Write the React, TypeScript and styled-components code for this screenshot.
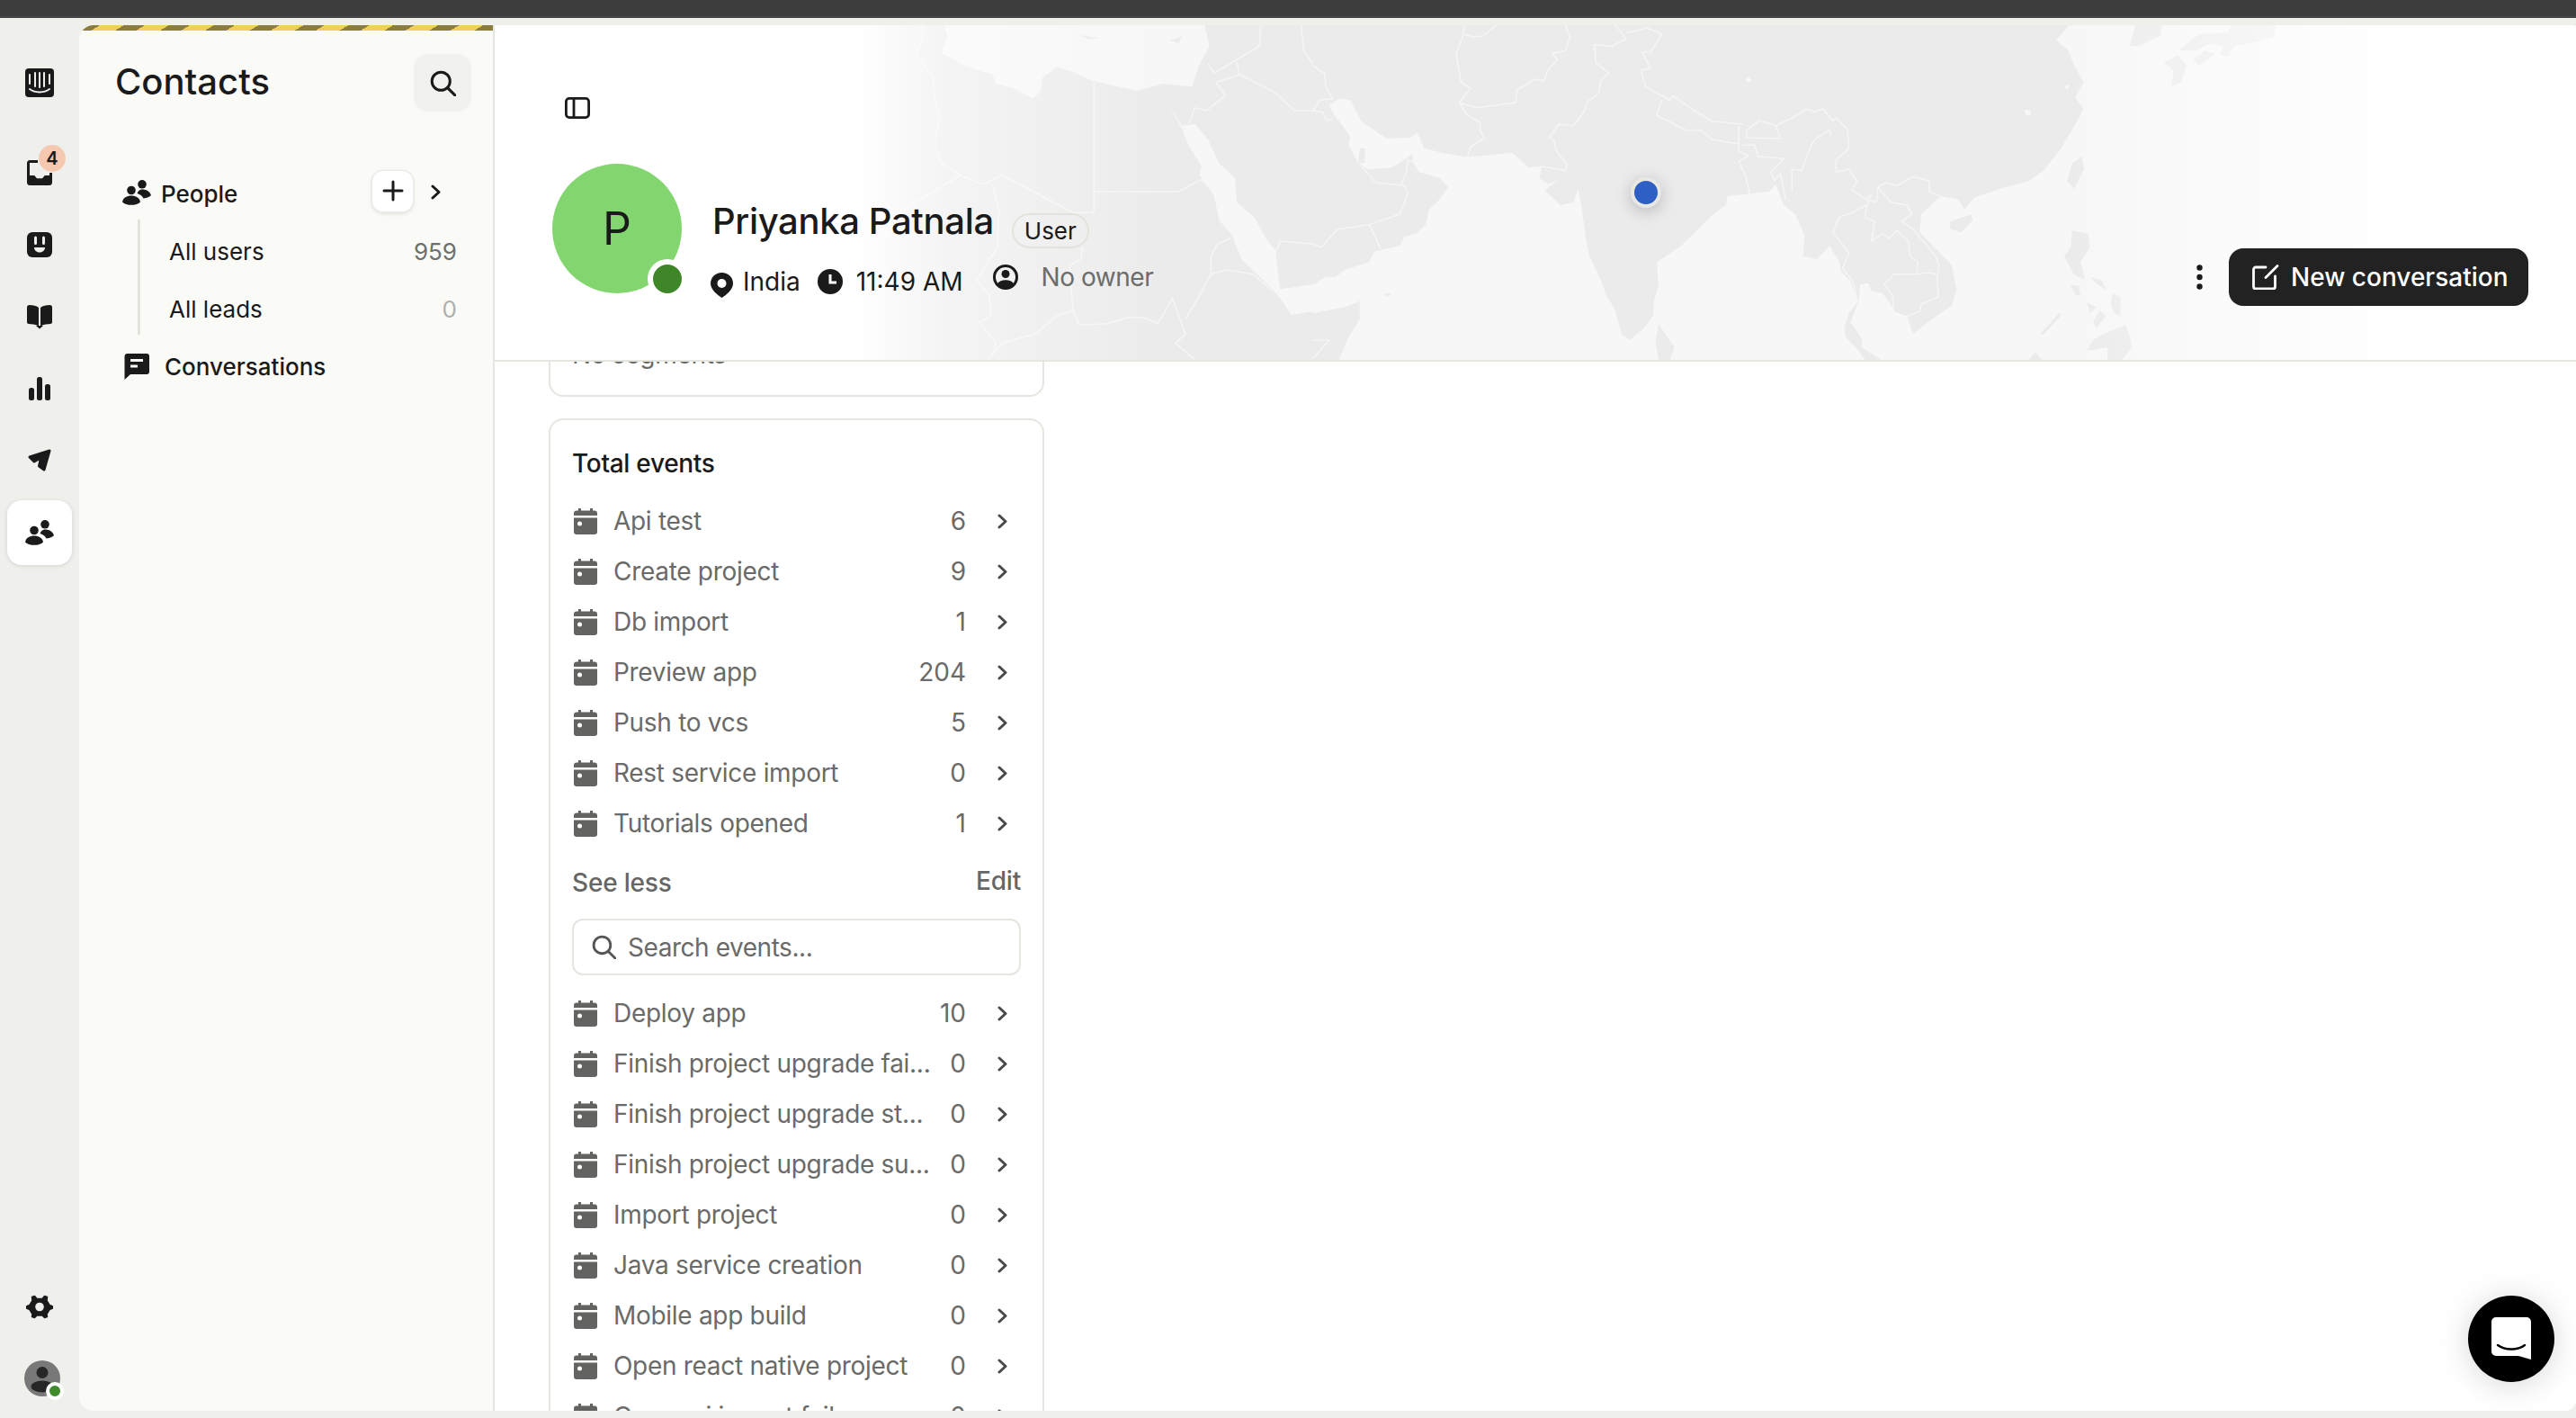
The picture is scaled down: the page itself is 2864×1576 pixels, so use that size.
import React from "react";
import styled, { createGlobalStyle } from "styled-components";

const GlobalStyle = createGlobalStyle`
  html, body { margin: 0; padding: 0; background: #efefec; }
  * { box-sizing: border-box; }
  body { font-family: Inter, "Noto Sans", "Liberation Sans", sans-serif; color: #1a1a1a; overflow: hidden; }
`;

const Page = styled.div`
  width: 2864px;
  height: 1576px;
  display: flex;
  flex-direction: column;
  overflow: hidden;
  background: #efefec;
`;
const TopBar = styled.div`
  height: 20px;
  flex: none;
  background: #3d3d3d;
  border-bottom: 2px solid #464646;
`;
const Workspace = styled.div`
  display: flex;
  height: 1540px;
  margin-top: 8px;
`;

/* ---------- rail ---------- */
const Rail = styled.nav`
  width: 88px;
  flex: none;
  display: flex;
  flex-direction: column;
  align-items: center;
  gap: 8px;
  padding-top: 28px;
`;
const RailItem = styled.div<{ $active?: boolean; $gapAfter?: number }>`
  position: relative;
  width: 72px;
  height: 72px;
  flex: none;
  display: flex;
  align-items: center;
  justify-content: center;
  border-radius: 16px;
  background: ${(p) => (p.$active ? "#ffffff" : "transparent")};
  box-shadow: ${(p) => (p.$active ? "0 1px 5px rgba(0,0,0,.12)" : "none")};
  margin-bottom: ${(p) => p.$gapAfter ?? 0}px;
`;
const RailSpacer = styled.div`
  flex: 1;
`;
const Badge = styled.span`
  position: absolute;
  left: 35px;
  top: 5px;
  width: 30px;
  height: 30px;
  border-radius: 50%;
  background: #f5c9b0;
  font-size: 20px;
  font-weight: 600;
  line-height: 30px;
  text-align: center;
`;
const RailAvatar = styled.div`
  position: relative;
  width: 40px;
  height: 40px;
  margin-left: 6px;
`;
const RailStatus = styled.span`
  position: absolute;
  right: -4px;
  bottom: -4px;
  width: 20px;
  height: 20px;
  border-radius: 50%;
  background: #3f8a2c;
  border: 4px solid #ffffff;
`;

/* ---------- sidebar ---------- */
const Sidebar = styled.aside`
  width: 462px;
  flex: none;
  display: flex;
  flex-direction: column;
  background: #fafbf7;
  border-right: 2px solid #e6e6e1;
  border-radius: 16px 0 0 16px;
  overflow: hidden;
`;
const Stripe = styled.div`
  height: 6px;
  flex: none;
  background: repeating-linear-gradient(149deg, #8a7d3f 0 12px, #edd15a 12px 25.7px);
`;
const SideHeader = styled.header`
  display: flex;
  align-items: center;
  justify-content: space-between;
  padding: 26px 24px 0 40px;
`;
const SideTitle = styled.h1`
  margin: 0 0 3px;
  font-size: 40px;
  font-weight: 500;
  line-height: 61px;
`;
const SearchButton = styled.div`
  width: 64px;
  height: 64px;
  border-radius: 16px;
  background: #f1f1ee;
  display: flex;
  align-items: center;
  justify-content: center;
`;
const SideNav = styled.div`
  margin-top: 59px;
  display: flex;
  flex-direction: column;
`;
const NavHead = styled.div<{ $h: number }>`
  height: ${(p) => p.$h}px;
  display: flex;
  align-items: center;
  font-size: 26px;
  font-weight: 500;
  padding-left: 48px;
  position: relative;
`;
const NavHeadIcon = styled.span<{ $x: number }>`
  position: absolute;
  left: ${(p) => p.$x}px;
  display: flex;
`;
const NavHeadLabel = styled.span<{ $x: number; $dy?: number }>`
  margin-left: ${(p) => p.$x}px;
  margin-top: ${(p) => p.$dy ?? 0}px;
`;
const AddButton = styled.div`
  width: 45px;
  height: 45px;
  margin-left: auto;
  margin-bottom: 3px;
  border-radius: 12px;
  background: #fff;
  box-shadow: 0 0 0 1.5px #ebebe7, 0 2px 5px rgba(0,0,0,.14);
  display: flex;
  align-items: center;
  justify-content: center;
`;
const NavChevron = styled.span`
  margin: 0 58px 0 20px;
  display: flex;
`;
const Tree = styled.div`
  margin-left: 65px;
  border-left: 3.5px solid #e3e3de;
  height: 128px;
  display: flex;
  flex-direction: column;
`;
const TreeRow = styled.div`
  height: 64px;
  padding: 6px 40px 0 32px;
  display: flex;
  align-items: center;
  justify-content: space-between;
  font-size: 26px;
  font-weight: 400;
`;
const TreeCount = styled.span<{ $muted?: boolean }>`
  color: ${(p) => (p.$muted ? "#b0b0ad" : "#6f6f6d")};
`;

/* ---------- main ---------- */
const Main = styled.main`
  flex: 1;
  min-width: 0;
  position: relative;
  display: flex;
  flex-direction: column;
  background: #ffffff;
  border-radius: 0 4px 12px 0;
  overflow: hidden;
`;
const Header = styled.header`
  position: relative;
  flex: none;
  height: 374px;
  border-bottom: 2px solid #e6e6e1;
  background: #fff;
  padding: 80px 53px 0 64px;
`;
const MapLayer = styled.svg`
  position: absolute;
  left: 0;
  top: 0;
  display: block;
`;
const MapPin = styled.span`
  position: absolute;
  left: 1263px;
  top: 169px;
  width: 34px;
  height: 34px;
  border-radius: 50%;
  background: #2e5fc4;
  border: 4px solid #e8e8e5;
  box-shadow: 0 4px 18px rgba(0,0,0,.22);
`;
const Toggle = styled.div`
  position: relative;
  margin-left: 14px;
  height: 24px;
  display: flex;
`;
const Profile = styled.div`
  position: relative;
  margin-top: 50px;
  display: flex;
  align-items: flex-start;
`;
const AvatarCircle = styled.div`
  position: relative;
  width: 144px;
  height: 144px;
  flex: none;
  border-radius: 50%;
  background: #83d66f;
  display: flex;
  align-items: center;
  justify-content: center;
  font-size: 50px;
  font-weight: 400;
`;
const AvatarStatus = styled.span`
  position: absolute;
  right: -6px;
  bottom: -6px;
  width: 44px;
  height: 44px;
  border-radius: 50%;
  background: #3f8628;
  border: 6px solid #ffffff;
`;
const Info = styled.div`
  margin: 40px 0 0 34px;
  display: flex;
  flex-direction: column;
`;
const NameRow = styled.div`
  display: flex;
  align-items: flex-start;
  height: 48px;
`;
const Name = styled.h2`
  margin: 0;
  font-size: 40px;
  font-weight: 500;
  line-height: 48px;
  letter-spacing: -0.35px;
  white-space: nowrap;
`;
const Tag = styled.span`
  margin: 15px 0 0 20px;
  height: 39px;
  padding: 0 12px;
  border: 2px solid #e3e3de;
  border-radius: 20px;
  font-size: 26px;
  line-height: 35px;
`;
const Meta = styled.div`
  margin-top: 23px;
  height: 40px;
  display: flex;
  align-items: center;
  font-size: 28px;
  white-space: nowrap;
`;
const MetaIcon = styled.span<{ $ml: number; $mr: number; $dy?: number }>`
  display: flex;
  margin-left: ${(p) => p.$ml}px;
  margin-right: ${(p) => p.$mr}px;
  margin-top: ${(p) => Math.max(p.$dy ?? 0, 0)}px;
  margin-bottom: ${(p) => Math.max(-(p.$dy ?? 0), 0)}px;
`;
const MetaMuted = styled.span`
  color: #6c6c6a;
  margin-bottom: 10px;
  letter-spacing: -0.45px;
`;
const Actions = styled.div`
  margin: 94px 0 0 auto;
  display: flex;
  align-items: center;
`;
const Dots = styled.span`
  display: flex;
  margin-right: 29px;
`;
const PrimaryButton = styled.div`
  width: 333px;
  height: 64px;
  border-radius: 16px;
  background: #222222;
  color: #ffffff;
  display: flex;
  align-items: center;
  padding-left: 26px;
  gap: 13px;
  font-size: 28px;
  font-weight: 500;
  white-space: nowrap;
`;

const Scroller = styled.div`
  flex: 1;
  min-height: 0;
  overflow: hidden;
  padding-left: 60px;
`;
const Column = styled.div`
  width: 551px;
  margin-top: -63px;
  display: flex;
  flex-direction: column;
  gap: 24px;
`;
const Card = styled.section`
  border: 2px solid #e6e6e1;
  border-radius: 16px;
  padding: 0 24px;
  background: #fff;
`;
const SegmentText = styled.div`
  font-size: 28px;
  line-height: 36px;
  color: #6a6a68;
  letter-spacing: -0.3px;
  margin: 35px 0 27px;
`;
const CardTitle = styled.h3`
  margin: 30px 0 18px;
  font-size: 28px;
  font-weight: 500;
  line-height: 36px;
  letter-spacing: -0.3px;
`;
const EventRowBox = styled.div`
  height: 56px;
  display: flex;
  align-items: center;
  padding: 0 15px 0 2px;
  color: #6a6a68;
  font-size: 28px;
`;
const EventIcon = styled.span`
  flex: none;
  display: flex;
  margin-right: 18px;
`;
const EventName = styled.span`
  flex: 1;
  min-width: 0;
  overflow: hidden;
  white-space: nowrap;
  letter-spacing: -0.3px;
`;
const EventCount = styled.span`
  flex: none;
  margin-left: 16px;
`;
const EventChevron = styled.span`
  flex: none;
  display: flex;
  margin-left: 35px;
`;
const SeeRow = styled.div`
  margin-top: 18px;
  height: 40px;
  display: flex;
  align-items: center;
  justify-content: space-between;
  color: #666664;
  font-size: 28px;
  font-weight: 500;
  letter-spacing: -0.2px;
`;
const EditLabel = styled.span`
  margin-bottom: 4px;
`;
const SearchBox = styled.div`
  margin: 20px 0 14px;
  height: 63px;
  border: 2px solid #e6e6e1;
  border-radius: 12px;
  display: flex;
  align-items: center;
  padding-left: 20px;
  gap: 13px;
  color: #6a6a68;
  font-size: 28px;
  letter-spacing: -0.45px;
`;
const Messenger = styled.div`
  position: absolute;
  right: 24px;
  bottom: 32px;
  width: 96px;
  height: 96px;
  border-radius: 50%;
  background: #000;
  box-shadow: 0 2px 30px rgba(0,0,0,.12), 0 6px 60px rgba(0,0,0,.05);
  display: flex;
  align-items: center;
  justify-content: center;
`;

/* ---------- icons ---------- */
const ink = "#1a1a1a";
const IntercomIcon = () => (
  <svg width="32" height="32" viewBox="0 0 32 32">
    <rect width="32" height="32" rx="4" fill={ink} />
    <g stroke="#efefec" strokeWidth="2" strokeLinecap="round" fill="none">
      <path d="M5 7v10M11 5v15M16 5v16M21 5v15M27 7v10" />
      <path d="M5 23c6 4.5 16 4.5 22 0" />
    </g>
  </svg>
);
const InboxIcon = () => (
  <svg width="28" height="28" viewBox="0 0 28 28">
    <path
      d="M3.5 0H12v3H3v14h5l3 3.5h6l3-3.5h5V14h3v10.5a3.5 3.5 0 0 1-3.5 3.5H3.5A3.5 3.5 0 0 1 0 24.500V3.500A3.500 3.500 0 0 1 3.500 0Z"
      fill={ink}
    />
    <path d="M0 17h8l3 3.500h6l3-3.500h8v8H0Z" fill={ink} />
  </svg>
);
const FinIcon = () => (
  <svg width="28" height="28" viewBox="0 0 28 28">
    <rect width="28" height="28" rx="6" fill={ink} />
    <path d="M9.500 6v6.500M18.500 6v6.500" stroke="#efefec" strokeWidth="3" strokeLinecap="round" />
    <path d="M8 17h12c0 3-2.500 5.500-6 5.500S8 20 8 17Z" fill="#efefec" />
  </svg>
);
const BookIcon = () => (
  <svg width="28" height="27" viewBox="0 0 28 27">
    <path d="M0 2.500C0 1 1 0 2.500 0 7 0 10.500 .8 13 3v20.500c-3-1.800-8-2.500-11-2.500-1.200 0-2-.8-2-2Z" fill={ink} />
    <path d="M28 2.500C28 1 27 0 25.500 0 21 0 17.500 .8 15 3v20.500c3-1.800 8-2.500 11-2.500 1.200 0 2-.8 2-2Z" fill={ink} />
    <path d="M10 23h8l-4 3.500Z" fill={ink} />
  </svg>
);
const BarsIcon = () => (
  <svg width="24" height="26" viewBox="0 0 24 26" fill={ink}>
    <rect x="0" y="12" width="6" height="14" rx="2.500" />
    <rect x="9" y="0" width="6" height="26" rx="2.500" />
    <rect x="18" y="8" width="6" height="18" rx="2.500" />
  </svg>
);
const SendIcon = () => (
  <svg width="26" height="26" viewBox="0 0 26 26">
    <path d="M2 9 24 2 18 23 12.500 19 14.500 9.500 7 14Z" fill={ink} stroke={ink} strokeWidth="3" strokeLinejoin="round" />
  </svg>
);
const PeopleIcon = ({ w = 32, h = 28 }: { w?: number; h?: number }) => (
  <svg width={w} height={h} viewBox="0 0 32 28" fill={ink}>
    <circle cx="10" cy="11.500" r="4.800" />
    <path d="M0 24.500C1 19.500 5 17.500 10 17.500s9 2 10 7c-2 2.500-6 3.300-10 3.300S2 27 0 24.500Z" />
    <circle cx="22" cy="4.800" r="4.800" />
    <path d="M16.500 15c1-3 3-4.500 5.500-4.500 4.500 0 8.500 2 10 6.500-1.500 1.800-4.500 3-8.500 3.500-1-2.500-3.500-4.500-7-5.500Z" />
  </svg>
);
const GearIcon = () => (
  <svg width="30" height="28" viewBox="0 0 30 28">
    <path
      d="M9.500 2.500 12 5.500h6l2.500-3 3 1-.5 4 3 5 3.500 1.500v2L26 17.500l-3 5 .5 3-3 1-2.500-2.500h-6L9.500 26.500l-3-1 .5-3-3-5L.5 16v-2L4 12.500l3-5-.5-4Z"
      fill={ink}
      stroke={ink}
      strokeWidth="1.500"
      strokeLinejoin="round"
    />
    <circle cx="15" cy="14.500" r="4.800" fill="#efefec" />
  </svg>
);
const UserGlyph = () => (
  <svg width="40" height="40" viewBox="0 0 40 40">
    <defs>
      <clipPath id="rail-avatar-clip">
        <circle cx="20" cy="20" r="20" />
      </clipPath>
    </defs>
    <circle cx="20" cy="20" r="20" fill="#787878" />
    <g clipPath="url(#rail-avatar-clip)" fill="#262626">
      <circle cx="20" cy="13.500" r="6.500" />
      <ellipse cx="20" cy="29" rx="12.500" ry="6.500" />
    </g>
  </svg>
);
const SearchIcon = ({ size = 29, color = ink, sw = 2.700 }: { size?: number; color?: string; sw?: number }) => (
  <svg width={size} height={size} viewBox="0 0 26 26" fill="none" stroke={color} strokeWidth={sw} strokeLinecap="round">
    <circle cx="11" cy="11" r="9" />
    <path d="m18 18 7 7" />
  </svg>
);
const ChevronIcon = ({ color = ink, w = 11, h = 17 }: { color?: string; w?: number; h?: number }) => (
  <svg width={w} height={h} viewBox="0 0 11 17" fill="none" stroke={color} strokeWidth="3" strokeLinecap="round" strokeLinejoin="round">
    <path d="m2 2 7 6.500L2 15" />
  </svg>
);
const PlusIcon = () => (
  <svg width="24" height="24" viewBox="0 0 24 24" stroke={ink} strokeWidth="3" strokeLinecap="round">
    <path d="M12 2v20M2 12h20" />
  </svg>
);
const ChatIcon = () => (
  <svg width="28" height="29" viewBox="0 0 28 29">
    <path d="M3 0h22a3 3 0 0 1 3 3v17a3 3 0 0 1-3 3H7l-6.500 6V3A3 3 0 0 1 3 0Z" fill={ink} />
    <path d="M7 7.500h14M7 14h8" stroke="#fafbf7" strokeWidth="3" />
  </svg>
);
const ToggleIcon = () => (
  <svg width="28" height="24" viewBox="0 0 28 24" fill="none" stroke={ink} strokeWidth="2.800">
    <rect x="1.400" y="1.400" width="25.200" height="21.200" rx="3.500" />
    <path d="M10 2v20" />
  </svg>
);
const PinIcon = () => (
  <svg width="25" height="28" viewBox="0 0 25 28">
    <path d="M12.500 0C5.500 0 0 5.200 0 12c0 6.500 7 12.500 12.500 16C18 24.500 25 18.500 25 12 25 5.200 19.500 0 12.500 0Z" fill={ink} />
    <circle cx="12.500" cy="12" r="5" fill="#fff" />
  </svg>
);
const ClockIcon = () => (
  <svg width="28" height="28" viewBox="0 0 28 28">
    <circle cx="14" cy="14" r="14" fill={ink} />
    <path d="M14 6v9h7" fill="none" stroke="#fff" strokeWidth="3" />
  </svg>
);
const OwnerIcon = () => (
  <svg width="28" height="28" viewBox="0 0 28 28">
    <circle cx="14" cy="14" r="12.500" fill="none" stroke={ink} strokeWidth="3" />
    <circle cx="14" cy="10.500" r="4.500" fill={ink} />
    <path d="M4.500 22c2-3.500 5.500-4.800 9.500-4.800s7.500 1.300 9.500 4.800c-2.500 3-5.800 4.500-9.500 4.500S7 25 4.500 22Z" fill={ink} />
  </svg>
);
const DotsIcon = () => (
  <svg width="7" height="28" viewBox="0 0 7 28" fill={ink}>
    <circle cx="3.500" cy="3.500" r="3.200" />
    <circle cx="3.500" cy="14" r="3.200" />
    <circle cx="3.500" cy="24.500" r="3.200" />
  </svg>
);
const ComposeIcon = () => (
  <svg width="30" height="28" viewBox="0 0 30 28" fill="none" stroke="#fff" strokeWidth="2.800" strokeLinecap="round" strokeLinejoin="round">
    <path d="M15 3H4a2.500 2.500 0 0 0-2.500 2.500v19A2.500 2.500 0 0 0 4 27h19a2.500 2.500 0 0 0 2.500-2.500V13" />
    <path d="m15 14.500 13-13" />
  </svg>
);
const CalendarIcon = () => (
  <svg width="26" height="29" viewBox="0 0 26 29">
    <path d="M5 0h3v3H5ZM18 0h3v3h-3Z" fill="#636361" />
    <path d="M3 2.500h20a3 3 0 0 1 3 3V8H0V5.500a3 3 0 0 1 3-3Z" fill="#636361" />
    <path d="M0 10.500h26V26a3 3 0 0 1-3 3H3a3 3 0 0 1-3-3Z" fill="#636361" />
    <circle cx="6.500" cy="17" r="2.500" fill="#fff" />
  </svg>
);
const MessengerIcon = () => (
  <svg width="44" height="48" viewBox="0 0 44 48">
    <path d="M5 0h34a5 5 0 0 1 5 5v42L30 43H5a5 5 0 0 1-5-5V5a5 5 0 0 1 5-5Z" fill="#fff" />
    <path d="M7 31c8 6 22 6 30 0" fill="none" stroke="#000" strokeWidth="2.400" strokeLinecap="round" />
  </svg>
);

/* ---------- world map background, traced in three strips ---------- */
const strip = (baseX: number, data: string) =>
  data
    .trim()
    .split(/\s+/)
    .map((pair) => {
      const [x, y] = pair.split(",").map(Number);
      return `${(baseX + x / 2.8).toFixed(1)},${(28 + y / 3).toFixed(1)}`;
    })
    .join(" ");
const A = 900;
const B = 1460;
const C = 2020;

const oceanPoints = [
  strip(A, "1115,262 1160,335 1200,330 1240,380 1275,460 1325,510 1330,590 1385,640 1420,710 1450,750 1465,880 1568,865"),
  strip(B, "40,840 70,840 100,815 175,790 190,755 270,735 285,705 320,695 350,665 360,615 390,585 420,540 395,510 330,490 310,455 310,430 245,475 170,480 140,460 110,400 115,370 60,290 50,265 80,245 115,250 150,320 190,350 230,378 300,375 325,360 345,410 400,425 480,440 620,425 670,475 710,470 705,510 730,530 765,515 720,550 770,600 810,590 825,545 835,600 850,720 860,770 900,860 910,895 940,950 960,1030 985,1050 1030,1010 1060,965 1060,920 1075,870 1070,790 1105,765 1140,740 1180,700 1240,635 1285,600 1290,570 1420,555 1440,530 1465,600 1500,630 1530,700 1525,770"),
  strip(C, "0,780 40,735 70,790 75,820 105,855 130,920 135,865 160,860 170,885 205,895 230,930 240,955 280,970 300,1030 345,990 420,935 435,880 420,800 375,750 320,690 325,630 385,570 440,580 460,615 490,575 570,545 660,520 710,480 760,410 800,340 830,280 805,240 830,190 800,130 780,80 745,50 785,0 2400,0 2400,1116"),
  strip(B, "80,1116 110,1040 145,980 145,920 100,940 0,960"),
  strip(A, "1568,955 1500,965 1465,910 1440,880 1345,780 1315,700 1275,650 1260,570 1215,500 1220,470 1180,400 1160,345"),
].join(" ");
const medPoints = strip(A, "420,0 1230,0 1245,70 1215,130 1190,205 1100,195 1020,218 960,205 880,185 820,155 770,140 725,175 720,220 695,245 640,212 580,195 570,165 480,135 410,90 430,40");

const landShapes = [
  strip(A, "840,32 900,42 870,48"),
  strip(A, "1120,50 1160,38 1150,60"),
  strip(B, "145,410 162,410 160,460 140,460"),
  strip(B, "222,895 245,895 240,902 225,902"),
  strip(B, "1075,995 1125,1075 1110,1116 1075,1116 1065,1060"),
  strip(C, "130,920 100,960 85,1010 90,1040 130,1085 150,1116 200,1116 140,1075 140,1045 105,990"),
  strip(C, "415,655 480,630 485,650 450,690 415,680"),
  strip(C, "825,437 832,480 800,545 778,520 795,460"),
  strip(C, "795,685 845,695 850,740 820,790 835,850 800,830 770,770 790,740"),
  strip(C, "850,840 885,850 905,885 875,865"),
  strip(C, "790,865 815,870 820,900 805,900"),
  strip(C, "840,925 870,940 850,960"),
  strip(C, "860,990 880,950 900,970 870,1010"),
  strip(C, "920,895 945,905 945,970 925,960 915,930"),
  strip(C, "840,1085 860,1050 890,1030 960,1000 975,1040 980,1075 950,1116 905,1116 905,1075"),
  strip(C, "660,1116 680,1090 700,1116"),
  strip(C, "695,1030 755,960 762,965 705,1032"),
  strip(C, "990,0 1075,0 1070,35 1000,70 975,70"),
  strip(C, "1080,125 1125,100 1150,135 1135,190 1105,205 1110,150"),
  strip(C, "1170,115 1210,85 1240,95 1190,135"),
  strip(C, "1125,85 1190,30 1280,25 1290,0 1430,0 1420,40 1370,55 1300,70 1280,105 1255,100 1265,70 1225,60 1180,85"),
];
const lakes = [strip(B, "1345,180 1355,174 1366,183 1355,190"), strip(C, "645,283 665,283 665,300 650,300"), strip(C, "768,205 788,198 780,214")];

const borderLines = [
  strip(A, "355,0 350,50 330,95 385,175 390,250 405,300 390,400 410,460 470,500 540,530 600,500 820,625 885,625 885,190"),
  strip(A, "470,500 300,610 220,720"),
  strip(A, "570,530 590,620 585,740 520,850 560,900 565,970 530,990 580,1060 570,1100"),
  strip(A, "885,555 1150,555 1200,525 1220,515 1260,555"),
  strip(A, "850,740 845,780 810,800 820,950 840,1000 925,995 990,975 1040,975 1085,995 1130,910 1150,970 1170,1030 1140,1060 1200,1116"),
  strip(A, "820,950 770,970 700,1030 600,1060 560,1110"),
  strip(A, "1250,830 1300,815 1380,830 1440,885"),
  strip(A, "1170,980 1215,900 1250,830 1250,770 1270,730 1310,710"),
  strip(A, "1465,720 1450,760"),
  strip(A, "1465,720 1568,730"),
  strip(A, "1240,130 1260,160 1400,70 1405,0"),
  strip(A, "1265,190 1295,235 1235,285 1200,275 1180,330"),
  strip(A, "1265,190 1340,165 1450,225 1510,285 1568,285"),
  strip(A, "1330,125 1340,165"),
  strip(A, "1530,0 1540,90 1568,130"),
  strip(B, "470,0 465,40 445,95 460,190 490,210 455,258 480,300 520,325 520,355 535,375 490,405 480,440"),
  strip(B, "570,0 530,35 500,40 470,30"),
  strip(B, "455,258 510,275 630,258 635,215 660,200 690,180 720,185 730,150 760,115 745,95 785,85 800,40 785,0"),
  strip(B, "940,0 975,45 930,70 875,65 880,125 920,160 895,185 890,225 855,255 840,295 810,335 765,330 735,375 750,385 755,415 790,465 785,485 710,470"),
  strip(B, "975,25 1040,10 1085,30 1050,90 1025,90 1050,145 1020,150 1035,205 1110,250 1120,235 1180,280 1240,320 1340,330"),
  strip(B, "1085,250 1070,300 1160,350 1210,352 1240,380 1320,395"),
  strip(B, "1350,350 1390,318 1440,335 1455,378 1350,375 1350,350"),
  strip(B, "1325,335 1325,420 1355,435 1325,455 1345,500 1360,565"),
  strip(B, "1335,400 1375,400 1385,438 1465,445 1425,490 1435,520 1455,495 1470,580"),
  strip(B, "1490,480 1490,555"),
  strip(B, "1490,480 1520,485 1550,400 1568,375"),
  strip(B, "1440,335 1490,310 1535,280 1568,290"),
  strip(B, "0,135 35,160 40,210 60,245 20,250 0,285 30,290 40,315 60,315"),
  strip(B, "150,470 195,525 285,535 295,560 270,630 175,665 75,680 25,740 0,730"),
  strip(B, "175,665 210,745"),
  strip(B, "310,455 295,450 290,490 275,530"),
  strip(B, "0,1050 50,1050 0,1110"),
  strip(C, "0,285 20,280 50,320 60,310 95,345 100,410 60,450 60,490 100,480 125,520 110,550 150,580 170,565 155,600 110,625 70,640 50,690 100,760 80,810 115,860 125,920"),
  strip(C, "0,375 40,350 45,370"),
  strip(C, "155,600 150,640 180,655 170,720 205,695 225,710 250,685 285,720 290,770 315,790 310,830 240,830 210,865 235,900 240,955"),
  strip(C, "150,580 185,590 190,540 215,525 250,535 300,505 350,520 350,555 385,570"),
  strip(C, "190,540 230,590 280,600 295,630 265,655 300,680 370,770 380,800 375,850 378,905 325,930 320,955 280,970"),
  strip(C, "310,830 345,825 375,830"),
];

const WorldMap = () => (
  <MapLayer width="2314" height="372" viewBox="550 28 2314 372">
    <defs>
      <linearGradient id="fade-left" gradientUnits="userSpaceOnUse" x1="950" y1="0" x2="1300" y2="0">
        <stop offset="0" stopColor="#fff" stopOpacity="1" />
        <stop offset="0.3" stopColor="#fff" stopOpacity="0.45" />
        <stop offset="1" stopColor="#fff" stopOpacity="0" />
      </linearGradient>
      <linearGradient id="fade-right" gradientUnits="userSpaceOnUse" x1="2300" y1="0" x2="2680" y2="0">
        <stop offset="0" stopColor="#fff" stopOpacity="0" />
        <stop offset="1" stopColor="#fff" stopOpacity="1" />
      </linearGradient>
    </defs>
    <rect x="550" y="28" width="2314" height="372" fill="#ebebeb" />
    <polygon points={oceanPoints} fill="#f7f7f7" />
    <polygon points={medPoints} fill="#f7f7f7" />
    {landShapes.map((p) => (
      <polygon key={p} points={p} fill="#ebebeb" />
    ))}
    {lakes.map((p) => (
      <polygon key={p} points={p} fill="#f7f7f7" />
    ))}
    {borderLines.map((p) => (
      <polyline key={p} points={p} fill="none" stroke="#f5f5f5" strokeWidth="1.600" strokeLinejoin="round" />
    ))}
    <rect x="550" y="28" width="750" height="372" fill="url(#fade-left)" />
    <rect x="2300" y="28" width="564" height="372" fill="url(#fade-right)" />
  </MapLayer>
);

/* ---------- data ---------- */
const topEvents: [string, number][] = [
  ["Api test", 6],
  ["Create project", 9],
  ["Db import", 1],
  ["Preview app", 204],
  ["Push to vcs", 5],
  ["Rest service import", 0],
  ["Tutorials opened", 1],
];
const moreEvents: [string, number][] = [
  ["Deploy app", 10],
  ["Finish project upgrade fai...", 0],
  ["Finish project upgrade st...", 0],
  ["Finish project upgrade su...", 0],
  ["Import project", 0],
  ["Java service creation", 0],
  ["Mobile app build", 0],
  ["Open react native project", 0],
  ["Openapi import failure", 0],
];

const EventRow = ({ name, count }: { name: string; count: number }) => (
  <EventRowBox>
    <EventIcon>
      <CalendarIcon />
    </EventIcon>
    <EventName>{name}</EventName>
    <EventCount>{count}</EventCount>
    <EventChevron>
      <ChevronIcon color="#4a4a48" />
    </EventChevron>
  </EventRowBox>
);

export default function App() {
  return (
    <Page>
      <GlobalStyle />
      <TopBar />
      <Workspace>
        <Rail>
          <RailItem $gapAfter={20}>
            <IntercomIcon />
          </RailItem>
          <RailItem>
            <InboxIcon />
            <Badge>4</Badge>
          </RailItem>
          <RailItem>
            <FinIcon />
          </RailItem>
          <RailItem>
            <BookIcon />
          </RailItem>
          <RailItem>
            <BarsIcon />
          </RailItem>
          <RailItem>
            <SendIcon />
          </RailItem>
          <RailItem $active>
            <PeopleIcon />
          </RailItem>
          <RailSpacer />
          <RailItem>
            <GearIcon />
          </RailItem>
          <RailItem>
            <RailAvatar>
              <UserGlyph />
              <RailStatus />
            </RailAvatar>
          </RailItem>
        </Rail>
        <Sidebar>
          <Stripe />
          <SideHeader>
            <SideTitle>Contacts</SideTitle>
            <SearchButton>
              <SearchIcon />
            </SearchButton>
          </SideHeader>
          <SideNav>
            <NavHead $h={61}>
              <NavHeadIcon $x={48}>
                <PeopleIcon />
              </NavHeadIcon>
              <NavHeadLabel $x={43} $dy={3}>People</NavHeadLabel>
              <AddButton>
                <PlusIcon />
              </AddButton>
              <NavChevron>
                <ChevronIcon />
              </NavChevron>
            </NavHead>
            <Tree>
              <TreeRow>
                All users
                <TreeCount>959</TreeCount>
              </TreeRow>
              <TreeRow>
                All leads
                <TreeCount $muted>0</TreeCount>
              </TreeRow>
            </Tree>
            <NavHead $h={70}>
              <NavHeadIcon $x={50}>
                <ChatIcon />
              </NavHeadIcon>
              <NavHeadLabel $x={47}>Conversations</NavHeadLabel>
            </NavHead>
          </SideNav>
        </Sidebar>
        <Main>
          <Header>
            <WorldMap />
            <MapPin />
            <Toggle>
              <ToggleIcon />
            </Toggle>
            <Profile>
              <AvatarCircle>
                P
                <AvatarStatus />
              </AvatarCircle>
              <Info>
                <NameRow>
                  <Name>Priyanka Patnala</Name>
                  <Tag>User</Tag>
                </NameRow>
                <Meta>
                  <MetaIcon $ml={-2} $mr={11} $dy={8}>
                    <PinIcon />
                  </MetaIcon>
                  India
                  <MetaIcon $ml={19} $mr={15}>
                    <ClockIcon />
                  </MetaIcon>
                  11:49 AM
                  <MetaIcon $ml={33} $mr={26} $dy={-10}>
                    <OwnerIcon />
                  </MetaIcon>
                  <MetaMuted>No owner</MetaMuted>
                </Meta>
              </Info>
              <Actions>
                <Dots>
                  <DotsIcon />
                </Dots>
                <PrimaryButton>
                  <ComposeIcon />
                  New conversation
                </PrimaryButton>
              </Actions>
            </Profile>
          </Header>
          <Scroller>
            <Column>
              <Card>
                <SegmentText>No segments</SegmentText>
              </Card>
              <Card>
                <CardTitle>Total events</CardTitle>
                {topEvents.map(([n, c]) => (
                  <EventRow key={n} name={n} count={c} />
                ))}
                <SeeRow>
                  See less
                  <EditLabel>Edit</EditLabel>
                </SeeRow>
                <SearchBox>
                  <SearchIcon size={27} color="#555553" />
                  Search events...
                </SearchBox>
                {moreEvents.map(([n, c]) => (
                  <EventRow key={n} name={n} count={c} />
                ))}
              </Card>
            </Column>
          </Scroller>
          <Messenger>
            <MessengerIcon />
          </Messenger>
        </Main>
      </Workspace>
    </Page>
  );
}
